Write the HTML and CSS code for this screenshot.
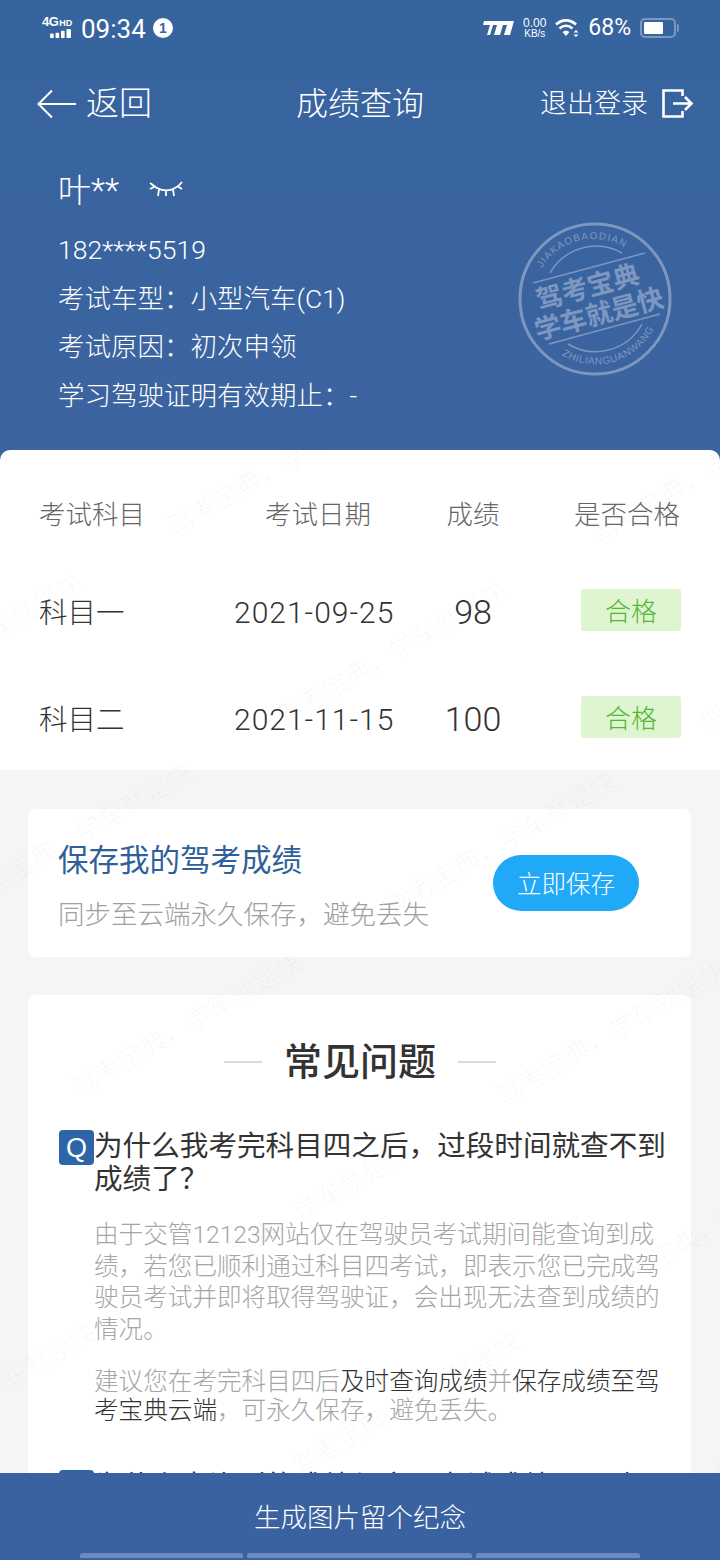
FILE: index.html
```html
<!DOCTYPE html>
<html lang="zh-CN">
<head>
<meta charset="utf-8">
<title>成绩查询</title>
<link rel="stylesheet" href="styles.css">
</head>
<body>
<div class="page">
  <header class="hero">
    <div class="status">
      <div class="status-side">
        <div class="net">
          <div class="net-top"><span class="net-4g">4G</span><span class="net-hd">HD</span></div>
          <svg class="net-bars" width="24" height="11" viewBox="0 0 24 11"><g fill="#fff"><rect x="0" y="5" width="4" height="5" rx="1"/><rect x="6" y="4" width="4" height="6" rx="1"/><rect x="12" y="2" width="4" height="8" rx="1"/><rect x="18" y="0" width="5" height="10" rx="1"/></g></svg>
        </div>
        <span class="time">09:34</span>
        <span class="notif">1</span>
      </div>
      <div class="status-side">
        <svg class="speed-logo" width="32" height="16" viewBox="0 0 32 16"><path fill="#fff" d="M1 1H31L27 15H21L24 5H20L17 15H11L14 5H10L7 15H4L7 5H0Z"/></svg>
        <div class="speed"><span>0.00</span><span class="speed-unit">KB/s</span></div>
        <svg class="wifi" width="26" height="20" viewBox="0 0 26 20"><g fill="none" stroke="#fff" stroke-width="2.6"><path d="M1 6.5C7 1 15 1 21 6.5"/><path d="M4.5 10.5C8.500 7 13.500 7 17.500 10.500"/></g><path fill="#fff" d="M7.500 14C10 12 12 12 14.500 14L11 18Z"/><path fill="#fff" d="M21 12l2.500 2.500h-5zM21 19l2.500-2.500h-5z"/></svg>
        <span class="battery-text">68%</span>
        <div class="battery"><div class="battery-fill"></div></div>
      </div>
    </div>
    <nav class="nav">
      <div class="nav-back">
        <svg width="40" height="30" viewBox="0 0 40 30"><path fill="none" stroke="#fff" stroke-width="2" d="M15 1.500L1.500 15L15 28.500M1.500 15H39"/></svg>
        <span>返回</span>
      </div>
      <h1 class="nav-title">成绩查询</h1>
      <div class="nav-exit">
        <span>退出登录</span>
        <svg width="32" height="30" viewBox="0 0 32 30"><path fill="none" stroke="#fff" stroke-width="2.600" d="M20.500 7V1.500H1.500V27.500H20.500V22M11 14.500H29.500M23 8L29.500 14.500L23 21"/></svg>
      </div>
    </nav>
    <section class="user">
      <div class="user-name">
        <span class="user-text">叶**</span>
        <svg width="36" height="22" viewBox="0 0 36 22"><path fill="none" stroke="#fff" stroke-width="1.800" d="M2 3C5 5 7 7 9 8C15 11 22 11 27 8C29 7 32 5 34 2M2 9L7 6.500M34 9L29 6M11 9.500L10 16M25 9.500L26 16M18 11V16"/></svg>
      </div>
      <p class="user-line">182****5519</p>
      <p class="user-line">考试车型：小型汽车(C1)</p>
      <p class="user-line">考试原因：初次申领</p>
      <p class="user-line">学习驾驶证明有效期止：-</p>
    </section>
    <svg class="stamp" width="156" height="156" viewBox="0 0 156 156">
      <defs>
        <path id="stamp-top" d="M25 47A60 60 0 0 1 108 27"/>
        <path id="stamp-bottom" d="M45 134A65 65 0 0 0 140 100"/>
      </defs>
      <g fill="none" stroke="#7d97c0">
        <circle cx="78" cy="78" r="75" stroke-width="3"/>
        <path stroke-width="1.500" d="M16 62L128 32M32 123L143 93M33 52A53 53 0 0 1 105 32M51 123A53 53 0 0 0 125 103"/>
      </g>
      <text class="stamp-small"><textPath href="#stamp-top">JIAKAOBAODIAN</textPath></text>
      <text class="stamp-small stamp-low"><textPath href="#stamp-bottom">ZHILIANGUANWANG</textPath></text>
      <g transform="rotate(-15 78 78)">
        <text class="stamp-big" x="74" y="74" text-anchor="middle">驾考宝典</text>
        <text class="stamp-big" x="78" y="103" text-anchor="middle">学车就是快</text>
      </g>
    </svg>
  </header>

  <section class="table-card">
    <div class="table-row table-head">
      <span>考试科目</span>
      <span class="head-date">考试日期</span>
      <span class="cell-score">成绩</span>
      <span class="cell-result">是否合格</span>
    </div>
    <div class="table-row table-body">
      <span class="subject">科目一</span>
      <span class="num">2021-09-25</span>
      <span class="cell-score score">98</span>
      <span class="badge">合格</span>
    </div>
    <div class="table-row table-body">
      <span class="subject">科目二</span>
      <span class="num">2021-11-15</span>
      <span class="cell-score score">100</span>
      <span class="badge">合格</span>
    </div>
  </section>

  <main class="content">
    <section class="save-card">
      <div class="save-text">
        <h2 class="save-title">保存我的驾考成绩</h2>
        <p class="save-sub">同步至云端永久保存，避免丢失</p>
      </div>
      <button class="save-btn">立即保存</button>
    </section>
    <section class="faq-card">
      <div class="faq-heading"><i class="faq-rule"></i><h2>常见问题</h2><i class="faq-rule"></i></div>
      <article class="faq-item">
        <h3 class="faq-q"><span class="q-mark">Q</span><span>为什么我考完科目四之后，过段时间就查不到成绩了？</span></h3>
        <p class="faq-a">由于交管12123网站仅在驾驶员考试期间能查询到成绩，若您已顺利通过科目四考试，即表示您已完成驾驶员考试并即将取得驾驶证，会出现无法查到成绩的情况。</p>
        <p class="faq-a faq-a2">建议您在考完科目四后<b>及时查询成绩</b>并<b>保存成绩至驾考宝典云端</b>，可永久保存，避免丢失。</p>
      </article>
      <article class="faq-item faq-next">
        <h3 class="faq-q"><span class="q-mark">Q</span><span>为什么查询到的成绩与实际考试成绩不一致，该怎么办？</span></h3>
      </article>
    </section>
  </main>

  <div class="watermark" aria-hidden="true">
    <div class="wm-grid">
      <span>驾考宝典，学车就是快</span><span>驾考宝典，学车就是快</span><span>驾考宝典，学车就是快</span><span>驾考宝典，学车就是快</span>
      <span>驾考宝典，学车就是快</span><span>驾考宝典，学车就是快</span><span>驾考宝典，学车就是快</span><span>驾考宝典，学车就是快</span>
      <span>驾考宝典，学车就是快</span><span>驾考宝典，学车就是快</span><span>驾考宝典，学车就是快</span><span>驾考宝典，学车就是快</span>
      <span>驾考宝典，学车就是快</span><span>驾考宝典，学车就是快</span><span>驾考宝典，学车就是快</span><span>驾考宝典，学车就是快</span>
      <span>驾考宝典，学车就是快</span><span>驾考宝典，学车就是快</span><span>驾考宝典，学车就是快</span><span>驾考宝典，学车就是快</span>
      <span>驾考宝典，学车就是快</span><span>驾考宝典，学车就是快</span><span>驾考宝典，学车就是快</span><span>驾考宝典，学车就是快</span>
      <span>驾考宝典，学车就是快</span><span>驾考宝典，学车就是快</span><span>驾考宝典，学车就是快</span><span>驾考宝典，学车就是快</span>
      <span>驾考宝典，学车就是快</span><span>驾考宝典，学车就是快</span><span>驾考宝典，学车就是快</span><span>驾考宝典，学车就是快</span>
    </div>
  </div>

  <footer class="footer">
    <span class="footer-text">生成图片留个纪念</span>
    <div class="gesture"><i></i><i></i><i></i></div>
  </footer>
</div>
</body>
</html>
```

FILE: styles.css
```css
* { box-sizing: border-box; }
html, body { margin: 0; padding: 0; }
body {
  font-family: Roboto, "Noto Sans CJK SC", sans-serif;
  font-weight: 300;
  color: #333;
  background: #f5f5f5;
}
h1, h2, h3, p { margin: 0; font-weight: inherit; }
.page {
  position: relative;
  width: 720px;
  height: 1560px;
  overflow: hidden;
  display: flex;
  flex-direction: column;
  background: #f5f5f5;
}

/* Header */
.hero {
  position: relative;
  height: 460px;
  flex: none;
  margin-bottom: -10px;
  background: linear-gradient(#36649e, #3c64a0);
  color: #fff;
}
.status {
  height: 56px;
  padding: 0 44px 0 42px;
  display: flex;
  justify-content: space-between;
  align-items: center;
}
.status-side { display: flex; align-items: center; }
.net { width: 31px; height: 22px; display: flex; flex-direction: column; align-items: flex-end; margin-right: 8px; }
.net-top { display: flex; align-items: baseline; width: 100%; line-height: 10px; font-family: "Liberation Sans", sans-serif; font-weight: 700; }
.net-4g { font-size: 13px; letter-spacing: -0.500px; }
.net-hd { font-size: 9px; margin-left: 1px; }
.net-bars { margin-top: 1px; }
.time { font-size: 26px; font-weight: 400; line-height: 30px; width: 72px; padding-top: 1px; }
.notif {
  width: 20px; height: 20px; border-radius: 50%;
  background: #fff; color: #36649e;
  font: 700 14px/20px "Liberation Sans", sans-serif;
  text-align: center;
}
.speed-logo { margin-right: 6px; }
.speed {
  width: 27px; margin-right: 7px;
  display: flex; flex-direction: column; align-items: center;
  font: 400 12px/11px "Liberation Sans", sans-serif;
}
.speed-unit { font-size: 10px; line-height: 10px; }
.wifi { margin-right: 7px; }
.battery-text { font-size: 23px; font-weight: 400; margin-right: 9px; line-height: 28px; }
.battery {
  position: relative;
  width: 36px; height: 20px;
  border: 2px solid #7d97c0;
  border-radius: 5px;
  padding: 2px;
}
.battery::after {
  content: "";
  position: absolute;
  right: -5px; top: 4px;
  width: 2px; height: 8px;
  background: #7d97c0;
  border-radius: 0 2px 2px 0;
}
.battery-fill { width: 68%; height: 100%; background: #fff; border-radius: 1px; }

.nav {
  height: 94px;
  padding: 2px 26px 0 37px;
  display: grid;
  grid-template-columns: 259px auto 1fr;
  align-items: center;
}
.nav-back { display: flex; align-items: center; gap: 9px; font-size: 33px; line-height: 40px; }
.nav-title { font-size: 32px; line-height: 40px; }
.nav-exit { display: flex; align-items: center; justify-content: flex-end; gap: 14px; font-size: 27px; line-height: 36px; }

.user { margin-top: 16px; padding-left: 58px; }
.user-name { height: 48px; display: flex; align-items: center; gap: 29px; font-size: 33px; font-weight: 300; }
.user-text { margin-top: -4px; }
.user-name svg { margin-top: 2px; }
.user-line { font-size: 26.500px; line-height: 48.500px; }
.user-name + .user-line { margin-top: 12px; }
.stamp { position: absolute; left: 517px; top: 221px; }
.stamp-small { font: 400 10px "Liberation Sans", sans-serif; letter-spacing: 1.100px; fill: #7d97c0; }
.stamp-low { letter-spacing: 0.600px; }
.stamp-big { font: 700 26.500px "Noto Sans CJK SC", sans-serif; fill: #7d97c0; }

/* Score table */
.table-card {
  position: relative;
  flex: none;
  height: 320px;
  padding: 0 39px;
  background: #fff;
  border-radius: 10px 10px 0 0;
}
.table-row {
  display: grid;
  grid-template-columns: 195px 180px 118px 149px;
  align-items: center;
}
.table-head { height: 124px; font-size: 26.500px; color: #666; }
.table-body { height: 76px; font-size: 28.500px; color: #333; }
.table-body + .table-body { margin-top: 31px; }
.subject { margin-top: -4px; }
.head-date { padding-left: 31px; }
.cell-score { text-align: center; }
.cell-result { text-align: right; padding-right: 1px; }
.num { font-size: 30px; letter-spacing: 1px; }
.score { font-size: 34px; }
.badge {
  justify-self: end;
  width: 100px; height: 42px;
  margin-top: -4px;
  background: #dff5d2;
  border-radius: 3px;
  color: #52b82f;
  font-size: 26px;
  line-height: 46px;
  text-align: center;
}

/* Content */
.content { flex: 1; min-height: 0; padding: 39px 29px 0 28px; }
.save-card {
  height: 148px;
  padding: 0 52px 0 30px;
  display: flex;
  align-items: center;
  justify-content: space-between;
  background: #fff;
  border-radius: 8px;
}
.save-text { padding-top: 9px; }
.save-title { font-size: 30.500px; line-height: 40px; color: #2f6099; font-weight: 400; }
.save-sub { margin-top: 14px; font-size: 26.500px; line-height: 40px; color: #a0a0a0; }
.save-btn {
  width: 146px; height: 56px;
  margin-top: -1px;
  border: 0; border-radius: 28px;
  background: #1fa9f7;
  color: #fff;
  font: inherit;
  font-size: 24.500px;
}
.faq-card {
  margin-top: 38px;
  padding: 0 25px 0 31px;
  background: #fff;
  border-radius: 8px 8px 0 0;
}
.faq-heading {
  height: 135px;
  padding: 0 5px 1px 0;
  display: flex;
  align-items: center;
  justify-content: center;
  gap: 22px;
}
.faq-heading h2 { font-size: 38px; font-weight: 500; line-height: 48px; color: #333; }
.faq-rule { width: 38px; height: 2px; background: #d8dadc; }
.faq-q {
  display: flex;
  align-items: flex-start;
  font-size: 28.600px;
  line-height: 33px;
  font-weight: 400;
  color: #333;
}
.q-mark {
  flex: none;
  width: 35px; height: 35px;
  background: #2d65a8;
  border-radius: 4px;
  color: #fff;
  font: 400 27px/37px "Liberation Sans", sans-serif;
  text-align: center;
}
.faq-a {
  margin-top: 23px;
  padding-left: 35px;
  font-size: 24.600px;
  line-height: 31.700px;
  color: #a6a6a6;
}
.faq-a2 { margin-top: 21px; line-height: 29px; }
.faq-a b { font-weight: inherit; color: #333; }
.faq-next { margin-top: 45px; }

/* Watermark */
.watermark {
  position: absolute;
  left: 0; top: 450px;
  width: 720px; height: 1023px;
  overflow: hidden;
  pointer-events: none;
}
.wm-grid {
  position: absolute;
  left: -687px; top: 47px;
  transform-origin: 0 0;
  transform: rotate(-30deg);
  display: grid;
  grid-template-columns: repeat(4, 363px);
  grid-auto-rows: 219px;
  font-size: 26px;
  line-height: 36px;
  color: rgba(0, 0, 0, 0.04);
  white-space: nowrap;
}

/* Footer */
.footer {
  position: absolute;
  left: 0; bottom: 0;
  width: 720px; height: 87px;
  background: #3a62a0;
  color: #fff;
  text-align: center;
}
.footer-text { display: block; margin-top: 25px; font-size: 26.500px; line-height: 40px; }
.gesture {
  position: absolute;
  left: 80px; top: 80px;
  display: grid;
  grid-template-columns: 163px 225px 164px;
  gap: 4px;
}
.gesture i { height: 5px; background: #6a8cc0; border-radius: 3px 3px 0 0; }
```
